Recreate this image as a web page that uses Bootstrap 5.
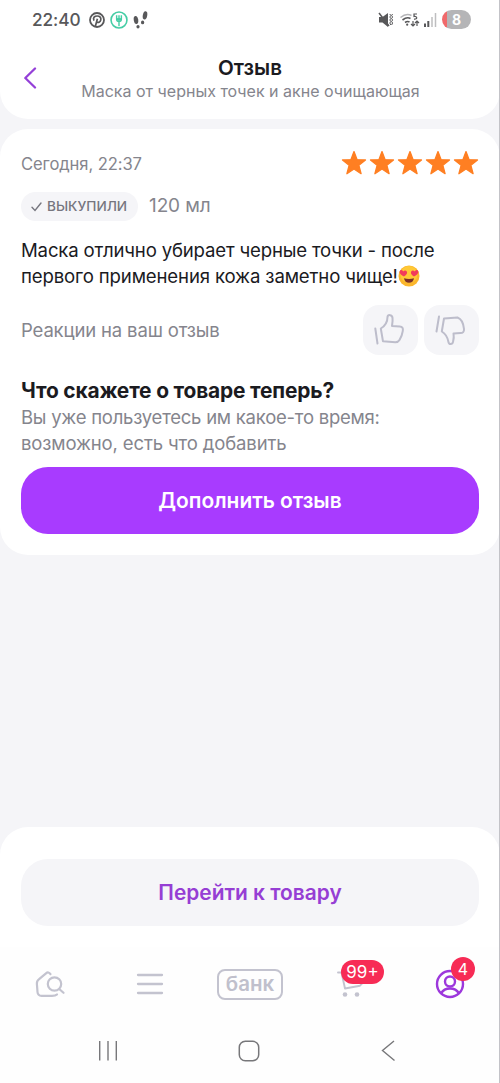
<!DOCTYPE html>
<html lang="ru">
<head>
<meta charset="utf-8">
<meta name="viewport" content="width=device-width, initial-scale=1">
<title>Отзыв</title>
<link href="https://cdn.jsdelivr.net/npm/bootstrap@5.3.0/dist/css/bootstrap.min.css" rel="stylesheet">
<style>
  body { font-family: Inter, "Noto Sans", sans-serif; background: #f5f5f8; color: #1b1b1f; }
  .screen { height: 1083px; overflow: hidden; position: relative; }
  .screen::after { content: ""; position: absolute; top: 0; right: 0; bottom: 0; width: 1px; background: #c3c3c8; }
  .screen svg { display: block; flex: none; }
  .txt { white-space: nowrap; }
  .top-panel { height: 119px; border-radius: 0 0 28px 28px; }
  .status { height: 39px; padding: 0 29px 0 32px; color: #58585a; }
  .clock { font-size: 17.3px; letter-spacing: -.1px; font-weight: 500; line-height: 39px; width: 52px; }
  .status-left { gap: 5px; }
  .battery { width: 29px; height: 19px; border-radius: 10px; background: linear-gradient(90deg, #f0696b 5px, #b5b5b7 5px); color: #fff; font-size: 14px; font-weight: 700; line-height: 19px; }
  .title-bar { display: grid; grid-template-columns: 60px 1fr 60px; padding-top: 14px; }
  .back-btn { padding: 14px 0 0 23px; }
  .page-title { font-size: 20.6px; font-weight: 600; line-height: 28px; padding-top: 1px; }
  .page-sub { font-size: 16px; line-height: 22px; margin-top: -2px; padding-left: 1px; color: #85858d; }
  .review { margin-top: 10px; padding: 21px; border-radius: 28px; }
  .muted { color: #85858d; }
  .date { font-size: 16.6px; letter-spacing: -.1px; line-height: 28px; height: 26px; }
  .stars { gap: 2px; margin-right: .5px; }
  .tag-row { margin-top: 16px; height: 29px; gap: 11px; }
  .bought { height: 29px; width: 117px; border-radius: 15px; background: #f5f5f8; color: #76767f; font-size: 13.6px; font-weight: 500; padding: 0 10px; gap: 5px; }
  .volume { font-size: 19px; letter-spacing: -.1px; }
  .review-text { margin-top: 16px; font-size: 18.6px; line-height: 26px; }
  .review-text .l1 { letter-spacing: -.18px; }
  .review-text .l2 { letter-spacing: -.15px; }
  .react-row { margin-top: 16px; height: 50px; }
  .react-label { font-size: 18.5px; letter-spacing: -.15px; padding-top: 2px; }
  .react-buttons { gap: 6px; }
  .react-btn { width: 55px; height: 50px; border-radius: 16px; background: #f5f5f8; }
  .ask { margin-top: 21px; font-size: 20.9px; letter-spacing: -.17px; font-weight: 650; line-height: 28px; padding-top: 1px; }
  .ask-sub { font-size: 18.5px; line-height: 26px; margin-top: -1px; }
  .ask-sub .s1 { letter-spacing: -.24px; }
  .ask-sub .s2 { letter-spacing: -.13px; }
  .wide-btn { height: 67px; border-radius: 27px; font-size: 20.9px; font-weight: 580; border: 0; width: 100%; }
  .wide-btn .txt { display: block; padding-top: 1px; }
  .wide-btn.fill, .wide-btn.fill:hover { margin-top: 11px; background: #a83bff; color: #fff; }
  .wide-btn.soft, .wide-btn.soft:hover { background: #f5f5f8; color: #963ed4; }
  .bottom-panel { padding: 32px 21px 21px; border-radius: 28px 28px 0 0; }
  .tabs { height: 74px; background: #fefefe; }
  .tabs .tab { width: 100px; height: 74px; }
  .bank { width: 66px; height: 31px; border: 2px solid #c3c3cf; border-radius: 8px; color: #c0c0cc; font-size: 20.5px; font-weight: 600; line-height: 26px; }
  .count { position: absolute; background: #f72b55; color: #fff; border-radius: 12px; height: 24px; line-height: 24px; font-size: 16px; text-align: center; }
  .count.cart { left: 41px; top: 13px; width: 43px; font-size: 17px; }
  .count.me { left: 51px; top: 10px; width: 24px; }
  .sysnav { height: 62px; background: #fefefe; padding: 0 104px 3px 98px; }
  .sysnav .home { margin-right: 2px; }
</style>
</head>
<body>
<svg width="0" height="0" class="position-absolute">
  <symbol id="star" viewBox="0 0 26 26"><path d="M13 1.600 16 9.600 24.500 10 17.900 15.300 20.100 23.700 13 19 5.900 23.700 8.100 15.300 1.500 10 10 9.600Z" fill="#ff7f22" stroke="#ff7f22" stroke-width="1.300" stroke-linejoin="round"/></symbol>
</svg>
<div class="screen d-flex flex-column">
  <header class="top-panel bg-white">
    <div class="status d-flex align-items-center justify-content-between">
      <div class="status-left d-flex align-items-center">
        <span class="clock txt">22:40</span>
        <svg width="16" height="16" viewBox="0 0 16 16" fill="none"><circle cx="8" cy="8" r="7" stroke="#58585a" stroke-width="1.800"/><path d="M6.300 14.500 8.400 6.800M5 8.700C3.600 5.500 5.600 4 8.200 4c2.700 0 4 1.800 3.600 3.800-.4 2.300-2.700 3.500-4.100 1.900" stroke="#58585a" stroke-width="1.700"/></svg>
        <svg width="18" height="18" viewBox="0 0 19 19" fill="none"><circle cx="9.500" cy="9.500" r="8.400" stroke="#45cda5" stroke-width="1.700"/><path d="M7 4.500v4.200c0 3 5 3 5 0V4.500M9.500 4.500V16" stroke="#45cda5" stroke-width="1.500"/><path d="M7.200 7.500h4.600v2H7.200z" fill="#45cda5"/></svg>
        <svg width="16" height="20" viewBox="0 0 16 20" fill="#58585a"><ellipse cx="3" cy="10" rx="2.200" ry="4" transform="rotate(-10 3 10)"/><ellipse cx="5" cy="16.800" rx="1.600" ry="1.800"/><ellipse cx="12" cy="5.300" rx="2.200" ry="4.200" transform="rotate(10 12 5.300)"/><ellipse cx="9.600" cy="12.400" rx="1.600" ry="1.900"/></svg>
      </div>
      <div class="d-flex align-items-center">
        <svg width="64" height="18" viewBox="0 0 64 18" fill="none" stroke="#58585a">
          <path d="M1 6h3.500L10 2v14L4.500 11.500H1z" fill="#58585a" stroke="none"/><path d="M1 2l10 13" stroke-width="1.500"/><path d="M11.800 3l1 1.500-1 1.500 1 1.500-1 1.500 1 1.500-1 1.500 1 2M14.600 3l-1 1.500 1 1.500-1 1.500 1 1.500-1 1.500 1 1.500-1 2" stroke-width="1"/>
          <path d="M22.500 6.500q5.500-4.500 11-2" stroke="#b4b4b7" stroke-width="1.500"/><path d="M24.500 9q4.500-3.500 8-1.500M27 11.500q2.500-1.800 4.500-.5" stroke-width="1.600"/><circle cx="29.200" cy="13.700" r="1.100" fill="#58585a" stroke="none"/>
          <path d="M39 3h-3v2.500c3.500-.8 3.800 3.200 0 2.600M35 10v5m-2-2 2 2 2-2M39 15v-5m-2 2 2-2 2 2" stroke-width="1.200"/>
          <path d="M47 12.500V16M50.300 10V16" stroke-width="2"/><path d="M54 6v10M57.500 2v14" stroke="#bebec0" stroke-width="1.500"/>
        </svg>
        <div class="battery text-center">8</div>
      </div>
    </div>
    <div class="title-bar">
      <div class="back-btn"><svg width="16" height="22" viewBox="0 0 16 22" fill="none"><path d="M12 1.500 2.300 11 12 20.500" stroke="#9440d8" stroke-width="2.300" stroke-linecap="round" stroke-linejoin="round"/></svg></div>
      <div class="text-center">
        <div class="page-title"><span class="txt">Отзыв</span></div>
        <div class="page-sub"><span class="txt">Маска от черных точек и акне очищающая</span></div>
      </div>
    </div>
  </header>

  <main class="review bg-white">
    <div class="d-flex justify-content-between">
      <span class="date muted txt">Сегодня, 22:37</span>
      <div class="stars d-flex">
        <svg width="26" height="26"><use href="#star"/></svg><svg width="26" height="26"><use href="#star"/></svg><svg width="26" height="26"><use href="#star"/></svg><svg width="26" height="26"><use href="#star"/></svg><svg width="26" height="26"><use href="#star"/></svg>
      </div>
    </div>
    <div class="tag-row d-flex align-items-center">
      <div class="bought d-flex align-items-center"><svg width="11" height="10" viewBox="0 0 11 10" fill="none"><path d="M1 5.300 4 8.500 10 1" stroke="#76767f" stroke-width="1.400" stroke-linecap="round"/></svg><span class="txt">ВЫКУПИЛИ</span></div>
      <span class="volume muted txt">120 мл</span>
    </div>
    <div class="review-text">
      <div class="txt l1">Маска отлично убирает черные точки - после</div>
      <div class="d-flex align-items-center"><span class="txt l2">первого применения кожа заметно чище!</span><svg width="22" height="22" viewBox="0 0 22 22"><circle cx="11" cy="11" r="10.500" fill="#fbb62d"/><circle cx="11" cy="9.500" r="8.500" fill="#ffc936"/><path d="M6 11.500C2 9.700 .8 6.800 2.200 5.500c1.300-1 2.700 0 3 1.100C6 5.400 7.900 5.100 8.800 6.500c1 1.900-.9 4-2.800 5ZM16 11.500c4-1.800 5.200-4.700 3.800-6-1.300-1-2.700 0-3 1.100-.8-1.200-2.700-1.500-3.600-.1-1 1.900.9 4 2.800 5Z" fill="#f23a5c"/><path d="M6 13.200q5 1.500 10 0-.8 4.600-5 4.600t-5-4.600Z" fill="#7b3028"/></svg></div>
    </div>
    <div class="react-row d-flex align-items-center">
      <span class="react-label muted txt me-auto">Реакции на ваш отзыв</span>
      <div class="react-buttons d-flex">
        <button class="react-btn btn p-0 border-0" aria-label="Нравится"><svg width="55" height="50" viewBox="0 0 55 50" fill="none" stroke="#bdbdcb" stroke-width="2" stroke-linecap="round" stroke-linejoin="round"><path d="M12.300 23.500 14.500 38.500M17.800 23.500C22 21 24.500 17.500 24.500 12c.4-2.800 4.600-2.400 5 .8.400 2.800 0 5.300-.5 8.200l7.800.4c2.600.2 3.500 2 3 4.500-.5 3.600-1.600 6.300-3.300 9.100-.9 1.600-2.300 2.200-4.200 2.200L20 36.300Z"/></svg></button>
        <button class="react-btn btn p-0 border-0" aria-label="Не нравится"><svg width="55" height="50" viewBox="0 0 55 50" fill="none" stroke="#bdbdcb" stroke-width="2" stroke-linecap="round" stroke-linejoin="round"><path d="M15 11.500 12.500 26.500M20 13.500 33.500 12.500C37.500 14 39.500 19 40 24c.2 3-1.200 4-3.500 4.100l-7 .3c.5 3 .3 5.500-.4 8.200-.7 3.300-4.200 3.300-4.700.2C23.600 32.500 22 29 17.800 26.500Z"/></svg></button>
      </div>
    </div>
    <div class="ask"><span class="txt">Что скажете о товаре теперь?</span></div>
    <div class="ask-sub muted"><div class="txt s1">Вы уже пользуетесь им какое-то время:</div><div class="txt s2">возможно, есть что добавить</div></div>
    <button class="wide-btn fill btn p-0 d-block"><span class="txt">Дополнить отзыв</span></button>
  </main>

  <div class="bottom-panel bg-white mt-auto">
    <button class="wide-btn soft btn p-0 d-block"><span class="txt">Перейти к товару</span></button>
  </div>
  <nav class="tabs d-flex">
    <div class="tab d-flex align-items-center justify-content-center"><svg width="30" height="28" viewBox="0 0 30 28" fill="none" stroke="#c3c3cf" stroke-width="2.200" stroke-linecap="round" stroke-linejoin="round"><path d="M15.500 4.200Q13.500 1.200 11 3.300L3.800 9.300Q1.600 11 1.900 14L2.500 22Q2.800 25.700 6.600 25.900H17Q20.500 25.900 22 24.500"/><circle cx="19.500" cy="14" r="6.700"/><path d="M24.500 19.200 28.500 22.800"/></svg></div>
    <div class="tab d-flex align-items-center justify-content-center"><svg width="28" height="24" viewBox="0 0 28 24"><path d="M2 3H26M2 12H26M2 21H26" stroke="#c3c3cf" stroke-width="2.300" stroke-linecap="round"/></svg></div>
    <div class="tab d-flex align-items-center justify-content-center"><div class="bank text-center"><span class="txt">банк</span></div></div>
    <div class="tab position-relative d-flex align-items-center justify-content-center"><svg width="28" height="28" viewBox="0 0 28 28" fill="none"><path d="M2 2.500h3.500l3.500 16 15-2.800 2-2" stroke="#c3c3cf" stroke-width="1.900" stroke-linejoin="round" stroke-linecap="round"/><circle cx="9" cy="24.500" r="2.300" fill="#c3c3cf"/><circle cx="21" cy="24.500" r="2.300" fill="#c3c3cf"/></svg><span class="count cart">99+</span></div>
    <div class="tab position-relative d-flex align-items-center justify-content-center"><svg width="30" height="30" viewBox="0 0 30 30" fill="none" stroke="#9d38dc" stroke-width="2.400"><circle cx="15" cy="15" r="13"/><circle cx="15" cy="12.500" r="5"/><path d="M6 24.300Q9 19.500 15 19.500T24 24.300"/></svg><span class="count me">4</span></div>
  </nav>
  <div class="sysnav d-flex align-items-center justify-content-between">
    <svg width="20" height="22" viewBox="0 0 20 22"><path d="M1.700 1v19.500M10 1v19.500M18.300 1v19.500" stroke="#77777a" stroke-width="1.400"/></svg>
    <svg class="home" width="22" height="22" viewBox="0 0 22 22"><rect x="1.300" y="1.300" width="19.400" height="19.400" rx="6" fill="none" stroke="#77777a" stroke-width="1.500"/></svg>
    <svg width="15" height="22" viewBox="0 0 15 22"><path d="M13 1 1.500 10.500 13.500 20.500" fill="none" stroke="#77777a" stroke-width="1.400"/></svg>
  </div>
</div>
<script src="https://cdn.jsdelivr.net/npm/bootstrap@5.3.0/dist/js/bootstrap.bundle.min.js"></script>
</body>
</html>
